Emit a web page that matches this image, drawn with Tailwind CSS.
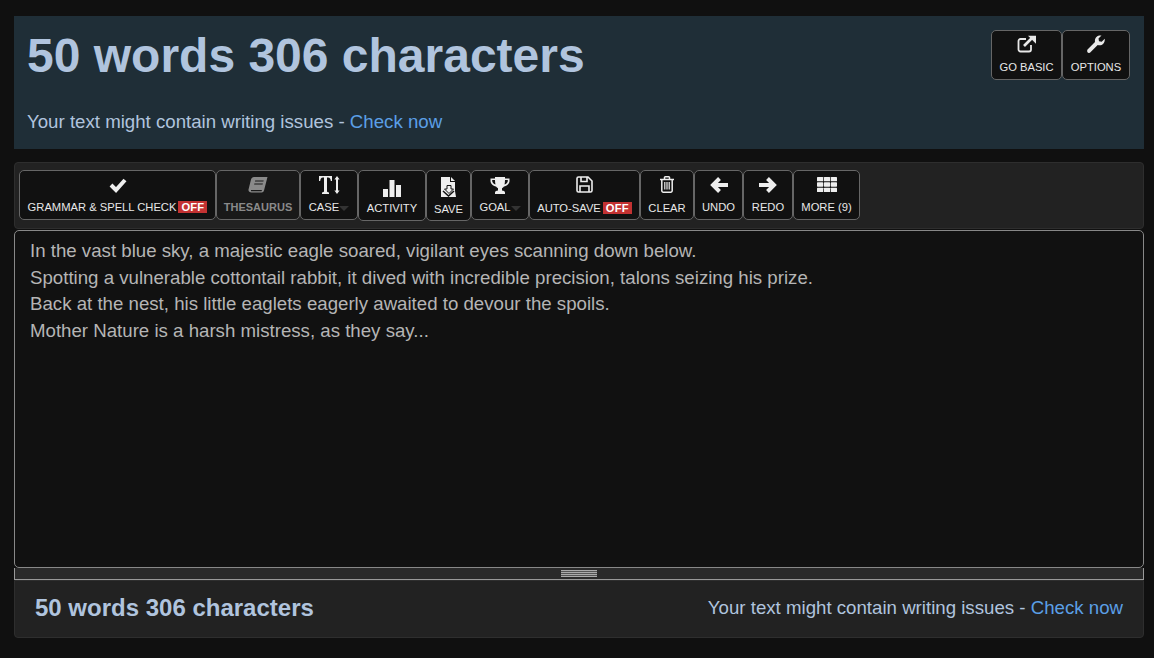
<!DOCTYPE html>
<html lang="en">
<head>
  <meta charset="UTF-8" />
  <title>Word counter</title>
  <script src="https://cdn.jsdelivr.net/npm/@tailwindcss/browser@4"></script>
</head>
<body class="bg-[#101010] font-['Liberation_Sans',Arial,sans-serif] h-[658px] overflow-hidden">
  <div class="ml-[14px] pt-[16px] w-[1130px]">

    <!-- Header -->
    <div class="bg-[#1f2e37] h-[133px] flex justify-between pl-[13px] pr-[14px]">
      <div>
        <h1 class="text-[48px] leading-[50px] font-bold text-[#b0c4de] mt-[15px]">50 words 306 characters</h1>
        <p class="text-[18.670px] leading-[26px] text-[#b0c4de] mt-[28px]">Your text might contain writing issues - <a class="text-[#5b9fe6]">Check now</a></p>
      </div>
      <div class="flex mt-[14px] h-[50px]">
        <button class="w-[71px] h-[50px] border border-[#666] rounded-[5px] bg-[#111] text-[#e8e8e8] flex flex-col items-center">
          <svg class="mt-[4px] w-[20px] h-[18px]" viewBox="0 0 20 18" fill="none" stroke="#e8e8e8"><path d="M14 10v4.500a2 2 0 0 1-2 2H3.500a2 2 0 0 1-2-2V6a2 2 0 0 1 2-2H9" stroke-width="1.800"/><path d="M7 11l8-8" stroke-width="2.600"/><path d="M11 .8h8v8z" fill="#e8e8e8" stroke="none"/></svg>
          <span class="text-[11.200px] leading-[12px] mt-[8px] whitespace-nowrap">GO BASIC</span>
        </button>
        <button class="w-[68px] h-[50px] border border-[#666] rounded-[5px] bg-[#111] text-[#e8e8e8] flex flex-col items-center">
          <svg class="mt-[4px] w-[20px] h-[18px]" viewBox="0 0 20 18" fill="#e8e8e8"><path d="M1.500 14.500l7.500-7.500c-.6-2.800 1-5.800 4-6.500 1-.2 2-.1 2.500.1l-3 3 .5 2.700 2.700.5 3-3c.4 2.500-.6 5-3 6.100-1.300.6-2.700.6-4 .1l-7.500 7.500c-.8.7-1.700.7-2.500 0-.7-.8-.7-1.800-.2-3z"/></svg>
          <span class="text-[11.200px] leading-[12px] mt-[8px]">OPTIONS</span>
        </button>
      </div>
    </div>

    <!-- Toolbar -->
    <div class="mt-[13px] h-[67px] bg-[#222] border border-[#2e2e2e] rounded-[4px] pl-[4px] pt-[7px] flex items-start">
      <button class="w-[197px] h-[50px] border border-[#666] rounded-[5px] bg-[#111] text-[#e8e8e8] flex flex-col items-center">
        <svg class="mt-[6px] w-[18px] h-[16px]" viewBox="0 0 18 16" fill="none" stroke="#eee" stroke-width="4"><path d="M2 8l5 5L16 3"/></svg>
        <span class="text-[11.200px] leading-[12px] mt-[8px] whitespace-nowrap flex items-center gap-[2px]">GRAMMAR &amp; SPELL CHECK <span class="bg-[#c33232] font-bold text-white px-[3px] tracking-[.2px]">OFF</span></span>
      </button>
      <button class="w-[84px] h-[50px] border border-[#666] rounded-[5px] bg-[#191919] text-[#8a8a8a] flex flex-col items-center">
        <svg class="mt-[6px] w-[20px] h-[18px]" viewBox="0 0 20 18" fill="#8a8a8a"><path d="M6 0h13.500l-3.500 13.500a2.500 2.500 0 0 1-2.400 2H3.500c-2 0-3.300-1.300-3-3L3 2.500C3.400 1 4.500 0 6 0zm1.200 3.500l-.3 1h8.500l.3-1zm-.8 3l-.3 1h8.500l.3-1zM3 13c-.2 1 .3 1.300 1.200 1.300h9.300l.5-1.300z"/></svg>
        <span class="text-[11px] leading-[12px] mt-[6px] font-bold">THESAURUS</span>
      </button>
      <button class="w-[58px] h-[50px] border border-[#666] rounded-[5px] bg-[#111] text-[#e8e8e8] flex flex-col items-center">
        <svg class="mt-[5px] w-[22px] h-[18px]" viewBox="0 0 22 18" fill="#eee"><path d="M1 0h13v5h-1.200c-.3-2-.8-3.500-2.800-3.500H9V15c0 1 .7 1.300 2 1.400V18H4v-1.600c1.300-.1 2-.4 2-1.400V1.500H5C3 1.500 2.500 3 2.200 5H1z"/><path d="M19 0l2.600 3.500H20V14.500h1.600L19 18l-2.600-3.500H18V3.500h-1.600z"/></svg>
        <span class="text-[11.200px] leading-[12px] mt-[7px] flex items-center">CASE<span class="w-0 h-0 border-x-[5px] border-x-transparent border-t-[5px] border-t-[#333] mt-[2px]"></span></span>
      </button>
      <button class="w-[68px] h-[51px] border border-[#666] rounded-[5px] bg-[#111] text-[#e8e8e8] flex flex-col items-center">
        <svg class="mt-[9px] w-[20px] h-[17px]" viewBox="0 0 20 17" fill="#eee"><rect x="1" y="9" width="5" height="8"/><rect x="7.500" y="0" width="5" height="17"/><rect x="14" y="5" width="5" height="12"/></svg>
        <span class="text-[11.200px] leading-[12px] mt-[5px]">ACTIVITY</span>
      </button>
      <button class="w-[45px] h-[51px] border border-[#666] rounded-[5px] bg-[#111] text-[#e8e8e8] flex flex-col items-center">
        <svg class="mt-[6px] w-[17px] h-[20px]" viewBox="0 0 17 20" fill="#eee"><path d="M1 0h9v5h5v9l1 6H1z"/><path d="M11 0l4 4h-4z"/><path d="M3 14l5.500 5 5.500-5" fill="none" stroke="#111" stroke-width="1.500"/><path d="M7 8.500h4v3.500h2.500L9 16.500 4.500 12H7z" stroke="#111"/></svg>
        <span class="text-[11.200px] leading-[12px] mt-[6px]">SAVE</span>
      </button>
      <button class="w-[58px] h-[50px] border border-[#666] rounded-[5px] bg-[#111] text-[#e8e8e8] flex flex-col items-center">
        <svg class="mt-[6px] w-[20px] h-[17px]" viewBox="0 0 20 17" fill="#eee"><path d="M5 0h10v1.500h4.500V4c0 2.500-2.500 5-5.500 5.500-.5.700-1.300 1.300-2 1.700v2.300c1.500 0 3 .7 3 2V17H5v-1.500c0-1.300 1.500-2 3-2v-2.300c-.7-.4-1.500-1-2-1.700C3 9 .5 6.500.5 4V1.500H5zM2.200 3v1c0 1.300 1.300 3 3.300 3.600C5.200 6.300 5 4.700 5 3zM15 3c0 1.700-.2 3.300-.5 4.600 2-.6 3.300-2.300 3.300-3.600V3z"/></svg>
        <span class="text-[11.200px] leading-[12px] mt-[7px] flex items-center">GOAL<span class="w-0 h-0 border-x-[5px] border-x-transparent border-t-[5px] border-t-[#333] mt-[2px]"></span></span>
      </button>
      <button class="w-[111px] h-[50px] border border-[#666] rounded-[5px] bg-[#111] text-[#e8e8e8] flex flex-col items-center">
        <svg class="mt-[5px] w-[17px] h-[17px]" viewBox="0 0 17 17" fill="none" stroke="#eee" stroke-width="1.600"><path d="M2.500 1h9.500l4 4v9.500a1.500 1.500 0 0 1-1.500 1.500h-12A1.500 1.500 0 0 1 1 14.500v-12A1.500 1.500 0 0 1 2.500 1z"/><path d="M5 1v4.500h6V1M4 16v-6h9v6"/></svg>
        <span class="text-[11.200px] leading-[12px] mt-[9px] whitespace-nowrap flex items-center gap-[2px]">AUTO-SAVE <span class="bg-[#c33232] font-bold text-white px-[3px] tracking-[.2px]">OFF</span></span>
      </button>
      <button class="w-[54px] h-[50px] border border-[#666] rounded-[5px] bg-[#111] text-[#e8e8e8] flex flex-col items-center">
        <svg class="mt-[5px] w-[16px] h-[17px]" viewBox="0 0 16 17" fill="none" stroke="#eee" stroke-width="1.500"><path d="M1 3.500h14" /><path d="M5.500 3.500V1.500a.7.7 0 0 1 .7-.7h3.600a.7.7 0 0 1 .7.7v2M2.800 3.500v11.200a1.500 1.500 0 0 0 1.500 1.500h7.400a1.500 1.500 0 0 0 1.500-1.500V3.500"/><path d="M5.800 6v7.500M8 6v7.500M10.200 6v7.500" stroke-width="1.200"/></svg>
        <span class="text-[11.200px] leading-[12px] mt-[9px]">CLEAR</span>
      </button>
      <button class="w-[49px] h-[50px] border border-[#666] rounded-[5px] bg-[#111] text-[#e8e8e8] flex flex-col items-center">
        <svg class="mt-[6px] w-[18px] h-[16px]" viewBox="0 0 18 16" fill="none" stroke="#eee" stroke-width="4"><path d="M9.500 1.500L3 8l6.500 6.500M4 8h14"/></svg>
        <span class="text-[11.200px] leading-[12px] mt-[8px]">UNDO</span>
      </button>
      <button class="w-[50px] h-[50px] border border-[#666] rounded-[5px] bg-[#111] text-[#e8e8e8] flex flex-col items-center">
        <svg class="mt-[6px] w-[18px] h-[16px]" viewBox="0 0 18 16" fill="none" stroke="#eee" stroke-width="4"><path d="M8.500 1.500L15 8l-6.500 6.500M14 8H0"/></svg>
        <span class="text-[11.200px] leading-[12px] mt-[8px]">REDO</span>
      </button>
      <button class="w-[67px] h-[50px] border border-[#666] rounded-[5px] bg-[#111] text-[#e8e8e8] flex flex-col items-center">
        <svg class="mt-[6px] w-[20px] h-[15px]" viewBox="0 0 20 15" fill="#eee"><rect width="6.200" height="4.300" rx=".6"/><rect x="6.900" width="6.200" height="4.300" rx=".6"/><rect x="13.800" width="6.200" height="4.300" rx=".6"/><rect y="5.350" width="6.200" height="4.300" rx=".6"/><rect x="6.900" y="5.350" width="6.200" height="4.300" rx=".6"/><rect x="13.800" y="5.350" width="6.200" height="4.300" rx=".6"/><rect y="10.700" width="6.200" height="4.300" rx=".6"/><rect x="6.900" y="10.700" width="6.200" height="4.300" rx=".6"/><rect x="13.800" y="10.700" width="6.200" height="4.300" rx=".6"/></svg>
        <span class="text-[11.200px] leading-[12px] mt-[9px] whitespace-nowrap">MORE (9)</span>
      </button>
    </div>

    <!-- Editor -->
    <div class="mt-[1px] h-[338px] bg-[#111] border border-[#888] rounded-[5px] px-[15px] pt-[7px] text-[18.670px] leading-[26.600px] text-[#b5b5b5]">
      <p>In the vast blue sky, a majestic eagle soared, vigilant eyes scanning down below.</p>
      <p>Spotting a vulnerable cottontail rabbit, it dived with incredible precision, talons seizing his prize.</p>
      <p>Back at the nest, his little eaglets eagerly awaited to devour the spoils.</p>
      <p>Mother Nature is a harsh mistress, as they say...</p>
    </div>

    <!-- Resize handle -->
    <div class="h-[12px] bg-[#2a2a2a] border-x border-b border-[#999] flex justify-center items-center">
      <div class="w-[36px] h-[7px] bg-[repeating-linear-gradient(to_bottom,#aaa_0,#aaa_1px,#555_1px,#555_2px)]"></div>
    </div>

    <!-- Footer -->
    <div class="h-[58px] bg-[#222] border border-[#2e2e2e] rounded-b-[4px] flex justify-between items-center pl-[20px] pr-[20px] pb-[2px]">
      <span class="text-[24px] font-bold text-[#b0c4de]">50 words 306 characters</span>
      <span class="text-[18.670px] text-[#b0c4de]">Your text might contain writing issues - <a class="text-[#5b9fe6]">Check now</a></span>
    </div>
  </div>
</body>
</html>
